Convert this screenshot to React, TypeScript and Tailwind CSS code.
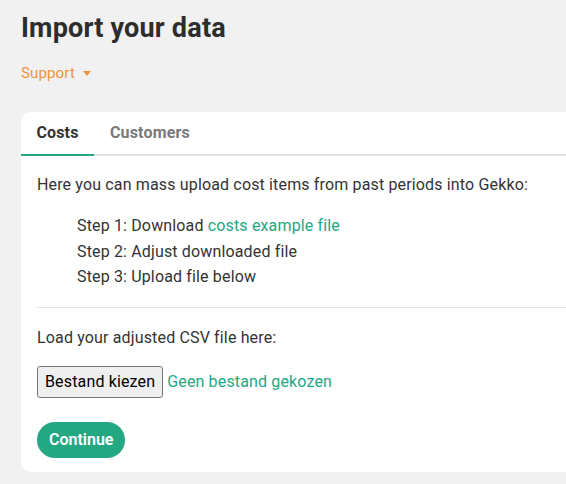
import { useState } from 'react';

const steps = [
  { label: 'Step 1: Download ', link: 'costs example file' },
  { label: 'Step 2: Adjust downloaded file' },
  { label: 'Step 3: Upload file below' },
];

export default function App() {
  const [tab, setTab] = useState<'costs' | 'customers'>('costs');

  return (
    <div
      className="min-h-[484px] overflow-hidden bg-[#f1f1f1] pl-[21px] tracking-[0.15px] text-[#333333]"
      style={{ fontFamily: 'Roboto, "Liberation Sans", sans-serif' }}
    >
      <h1 className="pt-[13px] text-[27px] font-bold leading-[30px] tracking-[0.2px] text-[#2d2d2d]">Import your data</h1>

      <button className="mt-[20px] flex items-center gap-[8px] text-[15px] leading-[20px] text-[#f0923a]">
        Support
        <svg width="8" height="5" viewBox="0 0 8 5" className="mt-[1px]">
          <path d="M0 0h8L4 5z" fill="#f0923a" />
        </svg>
      </button>

      <div className="mr-[-20px] mt-[29px] rounded-[10px] bg-white pb-[14px]">
        <div className="flex border-b-2 border-[#dee2e6] text-[16px] font-bold">
          <button
            onClick={() => setTab('costs')}
            className={`-mb-[2px] h-[44px] w-[73px] border-b-2 ${tab === 'costs' ? 'border-[#23a883] text-[#333333]' : 'border-transparent text-[#7a7a7a]'}`}
          >
            Costs
          </button>
          <button
            onClick={() => setTab('customers')}
            className={`-mb-[2px] h-[44px] px-[16px] border-b-2 ${tab === 'customers' ? 'border-[#23a883] text-[#333333]' : 'border-transparent text-[#7a7a7a]'}`}
          >
            Customers
          </button>
        </div>

        <div className="pl-[16px] text-[16px]">
          <p className="mt-[18px] leading-[22px]">Here you can mass upload cost items from past periods into Gekko:</p>

          <ul className="mt-[17px] pl-[40px] leading-[25.5px]">
            {steps.map((s) => (
              <li key={s.label}>
                {s.label}
                {s.link && <a className="text-[#23a883]">{s.link}</a>}
              </li>
            ))}
          </ul>

          <hr className="mt-[17px] border-[#e5e5e5]" />

          <p className="mt-[19px] leading-[22px]">Load your adjusted CSV file here:</p>

          <div className="mt-[17px] flex items-center gap-[4px]">
            <button className="h-[32px] rounded-[3px] border border-[#767676] bg-[#efefef] px-[7px] text-[16px] tracking-[0.15px] text-black">
              Bestand kiezen
            </button>
            <span className="text-[#23a883]">Geen bestand gekozen</span>
          </div>

          <button className="mt-[24px] h-[36px] rounded-full bg-[#23a883] px-[12px] text-[16px] font-semibold tracking-normal text-white">
            Continue
          </button>
        </div>
      </div>
    </div>
  );
}
